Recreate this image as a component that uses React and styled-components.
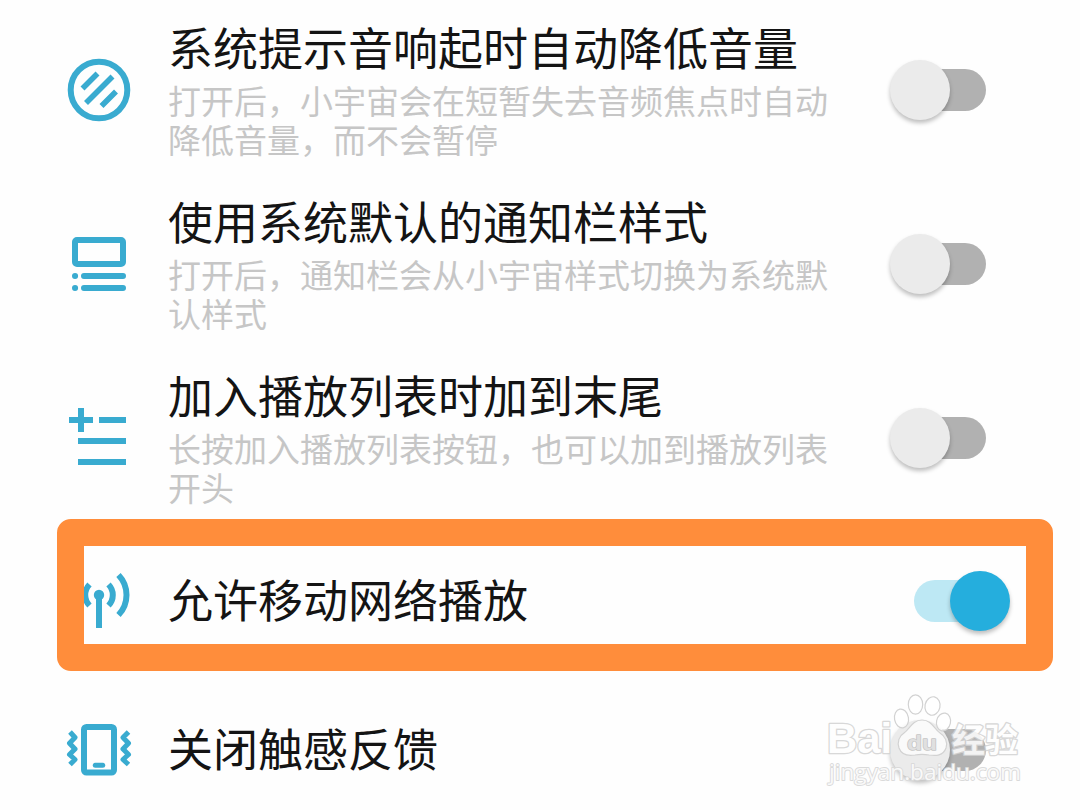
import React, { useState } from "react";
import styled, { createGlobalStyle } from "styled-components";

const GlobalStyle = createGlobalStyle`
  * {
    box-sizing: border-box;
  }
  body {
    margin: 0;
    background: #fefefe;
    font-family: "Noto Sans CJK SC", sans-serif;
  }
`;

const Page = styled.main`
  position: relative;
  width: 1080px;
  height: 810px;
  padding-top: 3px;
  overflow: hidden;
`;

const SettingRow = styled.div`
  position: relative;
  display: flex;
  align-items: center;
  height: ${({ $compact }) => ($compact ? "149px" : "174px")};
  margin-top: ${({ $spaced }) => ($spaced ? "1px" : "0")};
  padding: 0 70px 0 49px;
`;

const RowIcon = styled.svg`
  flex: none;
  width: 100px;
  height: 100px;
  margin-left: 1px;
  fill: none;
  stroke: #39abd0;
  stroke-width: 6;
`;

const RowText = styled.div`
  flex: 1;
  margin-left: 18px;
`;

const RowTitle = styled.div`
  margin-bottom: ${({ $compact }) => ($compact ? "3px" : "8px")};
  color: #141414;
  font-size: 45px;
  line-height: 52px;
  white-space: nowrap;
`;

const RowDescription = styled.div`
  width: 664px;
  color: #c6c6c6;
  font-size: 33px;
  line-height: 39px;
`;

const SwitchButton = styled.button`
  display: flex;
  flex: none;
  align-items: center;
  justify-content: center;
  position: relative;
  width: 120px;
  height: 60px;
  padding: 0;
  border: none;
  background: none;
  cursor: pointer;
`;

const SwitchTrack = styled.span`
  width: 72px;
  height: 42px;
  border-radius: 21px;
  background: ${({ $on }) => ($on ? "#bde8f4" : "#b1b1b1")};
`;

const SwitchThumb = styled.span`
  position: absolute;
  top: 0;
  left: ${({ $on }) => ($on ? "60px" : "0")};
  width: 60px;
  height: 60px;
  border-radius: 50%;
  background: ${({ $on }) => ($on ? "#25aedd" : "#ebebeb")};
  box-shadow: 0 3px 4px rgba(0, 0, 0, 0.25);
`;

const Highlight = styled.div`
  position: absolute;
  top: -7px;
  left: 57px;
  width: 996px;
  height: 152px;
  border-radius: 14px;
  border: 27px solid #ff8d3b;
  pointer-events: none;
`;

const WatermarkSvg = styled.svg`
  position: absolute;
  left: 820px;
  top: 680px;
  width: 220px;
  height: 120px;
  pointer-events: none;
`;

const DuckingIcon = () => (
  <RowIcon viewBox="0 0 100 100">
    <circle cx="49" cy="50" r="28.3" />
    <path d="M32.5 48.5L47.5 33.5M36 63L62.5 36.5M51.5 66L66 51.5" strokeWidth="5.6" />
  </RowIcon>
);

const NotificationIcon = () => (
  <RowIcon viewBox="0 0 100 100">
    <rect x="25" y="26" width="48" height="24" rx="2" />
    <path d="M25 62h0.1M25 74h0.1M34 62H73M34 74H73" strokeLinecap="round" />
  </RowIcon>
);

const PlaylistIcon = () => (
  <RowIcon viewBox="0 0 100 100">
    <path d="M31 20V44M19 32H43M49 32H76M28 53H76M28 74H76" />
  </RowIcon>
);

const AntennaIcon = () => (
  <RowIcon viewBox="0 0 100 100">
    <circle cx="49" cy="44" r="5.2" fill="#39abd0" stroke="none" />
    <path d="M49 44V77M39.5 33.5A15 15 0 0 0 39.5 54.5M58.5 33.5A15 15 0 0 1 58.5 54.5M29.5 24A29 29 0 0 0 29.5 64M68.5 24A29 29 0 0 1 68.5 64" />
  </RowIcon>
);

const VibrateIcon = () => (
  <RowIcon viewBox="0 0 100 100">
    <rect x="34" y="27" width="30" height="45.5" rx="2.5" />
    <path d="M45.3 65.3H52.7" strokeWidth="5" strokeLinecap="round" />
    <path
      d="M20 32L25 37.5L19.5 43.2L25 49L19.5 54.5L25 59.5L20 64.5M78.5 32L73 37.5L78.5 43.2L73 49L78.5 54.5L73 59.5L78.5 64.5"
      strokeWidth="5"
      strokeLinejoin="round"
    />
  </RowIcon>
);

const Watermark = () => (
  <WatermarkSvg viewBox="0 0 220 120">
    <g fill="#fff" fillOpacity="0.75" stroke="#d2d2d2" strokeWidth="1.2">
      <ellipse cx="95.5" cy="24.5" rx="7.2" ry="9.7" />
      <ellipse cx="112.5" cy="26" rx="7.5" ry="9.3" transform="rotate(12 112.5 26)" />
      <ellipse cx="81.5" cy="38.5" rx="7" ry="9.5" transform="rotate(-10 81.5 38.5)" />
      <ellipse cx="123.5" cy="42" rx="7" ry="9" transform="rotate(12 123.5 42)" />
      <path d="M102 40C92 40 90 49 84 53C79 56 77 62 79 68C82 76 89 76 95 75C100 74 104 74 109 75C116 76 123 76 126 68C128 62 125 56 120 53C114 49 112 40 102 40Z" />
    </g>
    <g
      fontFamily='"Liberation Sans", "Noto Sans CJK SC", sans-serif'
      fontWeight="700"
      fill="#fff"
      stroke="#d2d2d2"
      strokeWidth="2.6"
      strokeLinejoin="round"
      paintOrder="stroke"
      opacity="0.85"
    >
      <text x="7" y="73" fontSize="43" textLength="65" lengthAdjust="spacingAndGlyphs">
        Bai
      </text>
      <text
        x="87"
        y="69.5"
        fontSize="21"
        fill="#dcdcdc"
        stroke="#bdbdbd"
        strokeWidth="1.4"
        textLength="30"
        lengthAdjust="spacingAndGlyphs"
      >
        du
      </text>
      <text x="132" y="71.5" fontSize="33">
        经验
      </text>
    </g>
    <text
      x="9"
      y="100"
      fontFamily='"Open Sans", sans-serif'
      fontSize="22"
      fill="#fff"
      fillOpacity="0.85"
      stroke="#dadada"
      strokeWidth="1.8"
      strokeLinejoin="round"
      paintOrder="stroke"
      textLength="192"
      lengthAdjust="spacingAndGlyphs"
    >
      jingyan.baidu.com
    </text>
  </WatermarkSvg>
);

const settings = [
  {
    icon: DuckingIcon,
    title: "系统提示音响起时自动降低音量",
    description: "打开后，小宇宙会在短暂失去音频焦点时自动降低音量，而不会暂停",
  },
  {
    icon: NotificationIcon,
    title: "使用系统默认的通知栏样式",
    description: "打开后，通知栏会从小宇宙样式切换为系统默认样式",
  },
  {
    icon: PlaylistIcon,
    title: "加入播放列表时加到末尾",
    description: "长按加入播放列表按钮，也可以加到播放列表开头",
  },
  {
    icon: AntennaIcon,
    title: "允许移动网络播放",
    enabled: true,
    highlighted: true,
  },
  {
    icon: VibrateIcon,
    title: "关闭触感反馈",
  },
];

const Setting = ({ setting }) => {
  const [on, setOn] = useState(!!setting.enabled);
  const Icon = setting.icon;
  return (
    <SettingRow $compact={!setting.description} $spaced={setting.highlighted}>
      <Icon />
      <RowText>
        <RowTitle $compact={!setting.description}>{setting.title}</RowTitle>
        {setting.description && (
          <RowDescription>{setting.description}</RowDescription>
        )}
      </RowText>
      <SwitchButton role="switch" aria-checked={on} onClick={() => setOn(!on)}>
        <SwitchTrack $on={on} />
        <SwitchThumb $on={on} />
      </SwitchButton>
      {setting.highlighted && <Highlight />}
    </SettingRow>
  );
};

const App = () => (
  <>
    <GlobalStyle />
    <Page>
      {settings.map((setting) => (
        <Setting key={setting.title} setting={setting} />
      ))}
      <Watermark />
    </Page>
  </>
);

export default App;
